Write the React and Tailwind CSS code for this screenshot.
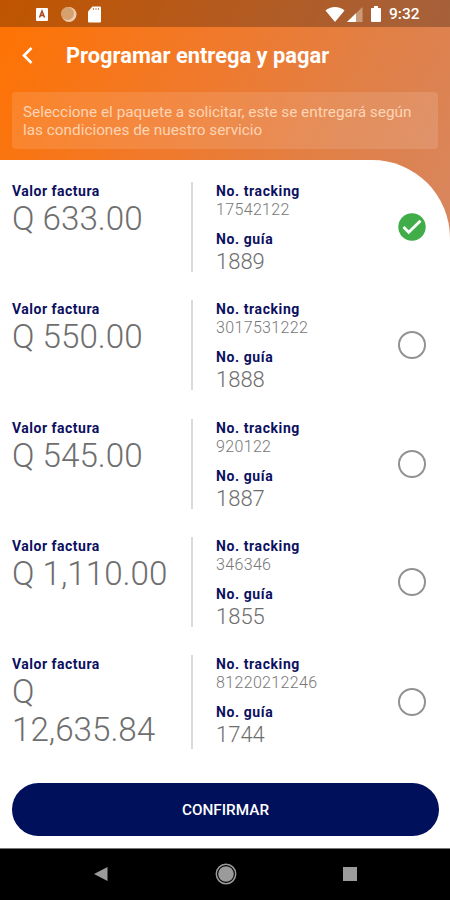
import React, { useState } from "react";

const paquetes = [
    { guia: "1889", tracking: "17542122", valor: "Q 633.00" },
    { guia: "1888", tracking: "3017531222", valor: "Q 550.00" },
    { guia: "1887", tracking: "920122", valor: "Q 545.00" },
    { guia: "1855", tracking: "346346", valor: "Q 1,110.00" },
    { guia: "1744", tracking: "81220212246", valor: "Q 12,635.84" },
];

function StatusBar() {
    return (
        <div className="flex h-[27px] items-center bg-black/25 pl-[35px] pr-[30px] text-white">
            <svg width="68" height="18" viewBox="0 0 68 18">
                <rect x="1" y="3" width="12" height="13" rx="1" fill="#fff" />
                <path d="M4.500 12.500L7 6l2.500 6.500M5.500 10.500h3" fill="none" stroke="#a8481c" strokeWidth="1.500" />
                <circle cx="34" cy="9.500" r="7.500" fill="#efcbb0" />
                <circle cx="32.500" cy="8.500" r="6.500" fill="#d5a16f" />
                <path d="M57.500 1.500H65a1 1 0 0 1 1 1v14a1 1 0 0 1-1 1H54a1 1 0 0 1-1-1V6.500z" fill="#fff" />
                <path d="M58.500 3v2M61 3v2M63.500 3v2" stroke="#c98354" strokeWidth="1" />
            </svg>
            <svg className="ml-auto" width="60" height="18" viewBox="0 0 60 18">
                <path d="M0.500 5.500C5 0.800 15 0.800 19.500 5.500L10 17z" fill="#fff" />
                <path d="M37.500 2v15H22z" fill="#c99b78" />
                <path d="M31 8.300V17h-9z" fill="#fff" />
                <path d="M49 1h4v2h2a1 1 0 0 1 1 1v12a1 1 0 0 1-1 1h-8a1 1 0 0 1-1-1V4a1 1 0 0 1 1-1h2z" fill="#fff" />
            </svg>
            <span className="ml-[4px] w-[31px] whitespace-nowrap pt-[2px] text-[15.500px] font-medium leading-none">
                9:32
            </span>
        </div>
    );
}

function Check({ activo }) {
    if (activo) {
        return (
            <svg width="28" height="28" viewBox="0 0 28 28">
                <circle cx="14" cy="14" r="13.700" fill="#41ad49" />
                <path d="M5.500 14l5.200 5.200L22.500 7.800" fill="none" stroke="#fff" strokeWidth="2.800" />
            </svg>
        );
    }
    return <span className="block size-[28px] rounded-full border-2 border-[#929292]" />;
}

function Paquete({ paquete, activo, onClick }) {
    return (
        <div onClick={onClick} className="flex cursor-pointer items-stretch">
            <div className="w-[179px] pr-[20px]">
                <p className="text-[14px] font-bold leading-[18px] tracking-[0.500px] text-[#0c1060]">Valor factura</p>
                <p className="text-[33.200px] font-light leading-[38px] text-[#6e6e6e]">{paquete.valor}</p>
            </div>
            <div className="w-[2px] bg-[#dadada]" />
            <div className="w-[170px] pl-[23px]">
                <p className="text-[14px] font-bold leading-[18px] tracking-[0.600px] text-[#0c1060]">No. tracking</p>
                <p className="text-[16px] font-light leading-[19px] tracking-[0.350px] text-[#777]">{paquete.tracking}</p>
                <p className="mt-[11px] text-[14px] font-bold leading-[18px] tracking-[0.600px] text-[#0c1060]">No. guía</p>
                <p className="-mb-[3px] text-[22px] font-light leading-[27px] text-[#6e6e6e]">{paquete.guia}</p>
            </div>
            <div className="flex items-center pl-[35px]">
                <Check activo={activo} />
            </div>
        </div>
    );
}

export default function App() {
    const [seleccionado, setSeleccionado] = useState("1889");

    return (
        <div className="flex h-[900px] w-[450px] flex-col overflow-hidden bg-white font-[Roboto,sans-serif]">
            <header className="h-[240px] shrink-0 bg-[linear-gradient(118deg,#ff7200_0%,#f1792a_40%,#e08048_72%,#d8865f_100%)]">
                <StatusBar />
                <div className="flex h-[57px] items-center pl-[21px]">
                    <svg width="13" height="18" viewBox="0 0 13 18">
                        <path d="M10.500 1L3 8.500l7.500 7.500" fill="none" stroke="#fff" strokeWidth="2.600" />
                    </svg>
                    <h1 className="ml-[32px] text-[21.850px] font-bold leading-none text-white">
                        Programar entrega y pagar
                    </h1>
                </div>
                <p className="mx-[12px] mt-[8px] h-[57px] rounded-[4px] bg-white/12 pl-[11px] pr-[16px] pt-[12px] text-[15.330px] leading-[17.500px] text-[#ffd4b4]">
                    Seleccione el paquete a solicitar, este se entregará según las condiciones de nuestro servicio
                </p>
            </header>

            <main className="z-10 -mt-[80px] flex flex-1 flex-col rounded-tr-[78px] bg-white px-[12px] pt-[22.300px]">
                <div className="flex flex-col gap-[28.200px]">
                    {paquetes.map((p) => (
                        <Paquete
                            key={p.guia}
                            paquete={p}
                            activo={p.guia === seleccionado}
                            onClick={() => setSeleccionado(p.guia)}
                        />
                    ))}
                </div>
                <button className="mb-[12px] mt-auto h-[53px] w-[427px] shrink-0 rounded-full bg-[#00105a] pt-[2px] text-[15.300px] font-medium text-white">
                    CONFIRMAR
                </button>
            </main>

            <nav className="flex h-[52px] shrink-0 items-center justify-between border-t border-[#777] bg-black pb-[1px] pl-[93px] pr-[93px]">
                <svg width="15" height="16" viewBox="0 0 15 16">
                    <path d="M14.500 1v14L1 8z" fill="#9b9b9b" />
                </svg>
                <svg width="22" height="22" viewBox="0 0 22 22">
                    <circle cx="11" cy="11" r="9.700" fill="none" stroke="#9b9b9b" strokeWidth="1.500" />
                    <circle cx="11" cy="11" r="7.800" fill="#9b9b9b" />
                </svg>
                <span className="size-[14px] bg-[#9b9b9b]" />
            </nav>
        </div>
    );
}
